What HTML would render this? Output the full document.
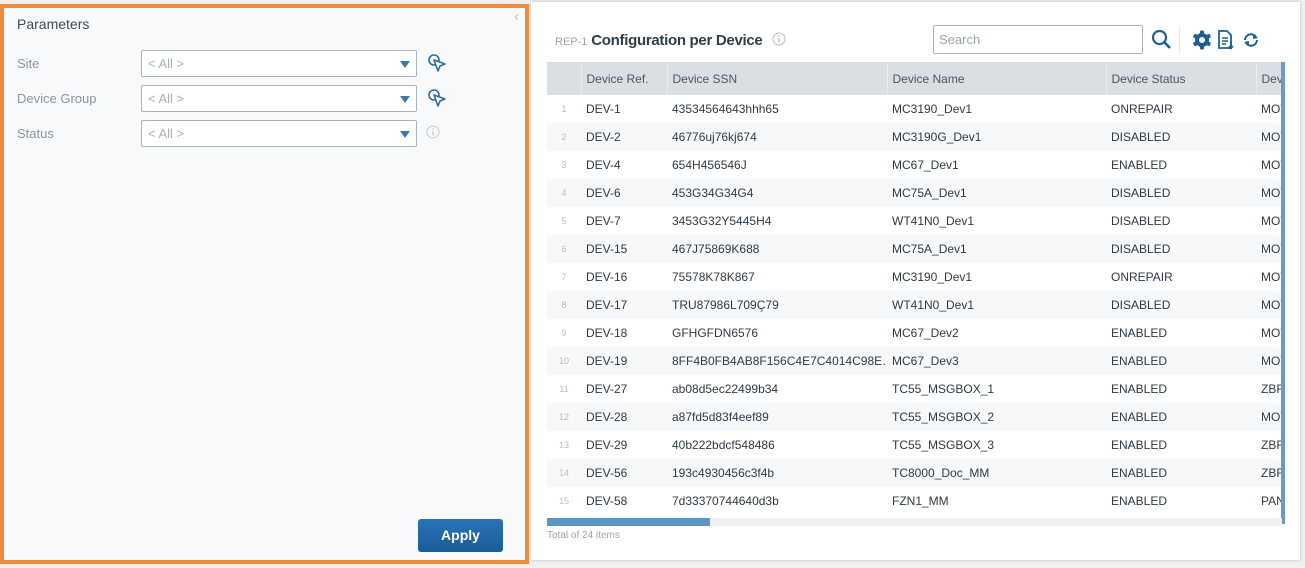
<!DOCTYPE html>
<html><head><meta charset="utf-8"><style>
*{box-sizing:border-box;margin:0;padding:0}
body{width:1305px;height:568px;overflow:hidden;background:#f0f0f0;font-family:"Liberation Sans",sans-serif;position:relative}
.left{position:absolute;left:0;top:4px;width:529px;height:560px;border:4px solid #ef8a3c;background:#f7f9fb}
.left h3{position:absolute;left:13px;top:8px;font-size:14px;color:#3f4a55;font-weight:normal}
.lbl{position:absolute;left:13px;font-size:13px;color:#8a959f}
.sel{position:absolute;left:137px;width:276px;height:27px;border:1px solid #a9b3bb;background:#fff;border-radius:2px;font-size:13px;color:#a8b1b9;padding:5px 6px}
.sel:after{content:"";position:absolute;right:6px;top:10px;border-left:5px solid transparent;border-right:5px solid transparent;border-top:7px solid #3b78a8}
.apply{position:absolute;left:414px;top:511px;width:85px;height:33px;background:linear-gradient(#2a73b6,#1a5c99);border-radius:3px;color:#fff;font-weight:bold;font-size:14px;text-align:center;line-height:33px}
.card{position:absolute;left:531px;top:2px;width:769px;height:558px;background:#fff;box-shadow:0 0 3px rgba(0,0,0,.25)}
.title{position:absolute;left:24px;top:30px;font-size:15px;color:#2f3d4a;font-weight:bold;letter-spacing:-0.3px}
.title small{font-size:11px;color:#9aa5ae;font-weight:normal;letter-spacing:0}
.search{position:absolute;left:402px;top:23px;width:210px;height:29px;border:1px solid #a9b3bb;border-radius:2px;font-size:13px;color:#9aa4ad;padding:6px 5px}
table{position:absolute;left:16px;top:60px;width:735px;border-collapse:collapse;font-size:12px;color:#2f3a44;table-layout:fixed}
th{background:#d9dfe3;height:33px;text-align:left;font-weight:normal;color:#4a555f;padding-left:5px;border-right:1px solid #e8ecef;white-space:nowrap;overflow:hidden}
td{height:28px;padding-left:5px;white-space:nowrap;overflow:hidden}
tr:nth-child(odd) td{background:#f6f8fa}
td.n{color:#b8bfc5;font-size:9px;text-align:center;padding:0}
.vs{position:absolute;left:750px;top:60px;width:4px;height:462px;background:#6b9bc3}
.hs{position:absolute;left:16px;top:516px;width:735px;height:8px;background:#eef2f5}
.hs div{width:163px;height:8px;background:#5d96c2}
.tot{position:absolute;left:16px;top:528px;font-size:10px;color:#9aa4ad}
</style></head><body>
<div class="left">
<h3>Parameters</h3>
<div class="lbl" style="top:48px">Site</div>
<div class="lbl" style="top:83px">Device Group</div>
<div class="lbl" style="top:118px">Status</div>
<div class="sel" style="top:42px">&lt; All &gt;</div>
<div class="sel" style="top:77px">&lt; All &gt;</div>
<div class="sel" style="top:112px">&lt; All &gt;</div>
<svg style="position:absolute;left:423px;top:45px" width="20" height="20" viewBox="0 0 20 20"><circle cx="7" cy="7" r="5" fill="none" stroke="#2e6a9c" stroke-width="1.6"/><path d="M7 7 L18 11 L13 13 L11 18 Z" fill="#fff" stroke="#2e6a9c" stroke-width="1.6" stroke-linejoin="round"/></svg>
<svg style="position:absolute;left:423px;top:80px" width="20" height="20" viewBox="0 0 20 20"><circle cx="7" cy="7" r="5" fill="none" stroke="#2e6a9c" stroke-width="1.6"/><path d="M7 7 L18 11 L13 13 L11 18 Z" fill="#fff" stroke="#2e6a9c" stroke-width="1.6" stroke-linejoin="round"/></svg>
<svg style="position:absolute;left:422px;top:117px" width="14" height="14"><circle cx="7" cy="7" r="6" fill="none" stroke="#c4cbd1"/><rect x="6.4" y="6" width="1.3" height="4.5" fill="#c4cbd1"/><circle cx="7" cy="4" r=".8" fill="#c4cbd1"/></svg>
<div style="position:absolute;left:510px;top:0px;color:#b9c2c9;font-size:15px">‹</div>
<div class="apply">Apply</div>
</div>
<div class="card">
<div class="title"><small>REP-1</small> Configuration per Device <svg width="14" height="14" style="vertical-align:-1px;margin-left:6px"><circle cx="7" cy="7" r="6" fill="none" stroke="#b5bec5"/><rect x="6.4" y="6" width="1.3" height="4.5" fill="#b5bec5"/><circle cx="7" cy="4" r=".8" fill="#b5bec5"/></svg></div>
<div class="search">Search</div>
<svg style="position:absolute;left:620px;top:27px" width="22" height="22"><circle cx="8.5" cy="8.5" r="6.5" fill="none" stroke="#1f5f92" stroke-width="2.2"/><path d="M13 13 L19 19" stroke="#1f5f92" stroke-width="2.6"/></svg>
<div style="position:absolute;left:648px;top:25px;width:1px;height:26px;background:#e3e7ea"></div>
<svg style="position:absolute;left:661px;top:28px" width="20" height="20" viewBox="0 0 20 20"><g fill="#1f5f92"><circle cx="10" cy="10" r="7"/><rect x="8" y="0.5" width="4" height="19" rx="1"/><rect x="8" y="0.5" width="4" height="19" rx="1" transform="rotate(60 10 10)"/><rect x="8" y="0.5" width="4" height="19" rx="1" transform="rotate(120 10 10)"/></g><circle cx="10" cy="10" r="3" fill="#fff"/></svg>
<svg style="position:absolute;left:685px;top:28px" width="20" height="20"><path d="M3 1 H11 L15 5 V18 H3 Z" fill="none" stroke="#1f5f92" stroke-width="1.8"/><path d="M6 8 H12 M6 11 H12 M6 14 H10" stroke="#1f5f92" stroke-width="1.5"/><path d="M15 11 V18 M13 16 L15 18.5 L17 16" stroke="#1f5f92" stroke-width="1.6" fill="none"/></svg>
<svg style="position:absolute;left:710px;top:29px" width="20" height="18"><path d="M4 9 A6 6 0 0 1 15 6" fill="none" stroke="#1f5f92" stroke-width="2"/><path d="M16 9 A6 6 0 0 1 5 12" fill="none" stroke="#1f5f92" stroke-width="2"/><path d="M12 3 L17 7 L12 8Z M8 15 L3 11 L8 10Z" fill="#1f5f92"/></svg>
<table>
<colgroup><col style="width:34px"><col style="width:86px"><col style="width:220px"><col style="width:219px"><col style="width:150px"><col style="width:26px"></colgroup>
<tr><th></th><th>Device Ref.</th><th>Device SSN</th><th>Device Name</th><th>Device Status</th><th>Dev</th></tr>
<tr><td class="n">1</td><td>DEV-1</td><td>43534564643hhh65</td><td>MC3190_Dev1</td><td>ONREPAIR</td><td>MOT</td></tr>
<tr><td class="n">2</td><td>DEV-2</td><td>46776uj76kj674</td><td>MC3190G_Dev1</td><td>DISABLED</td><td>MOT</td></tr>
<tr><td class="n">3</td><td>DEV-4</td><td>654H456546J</td><td>MC67_Dev1</td><td>ENABLED</td><td>MOT</td></tr>
<tr><td class="n">4</td><td>DEV-6</td><td>453G34G34G4</td><td>MC75A_Dev1</td><td>DISABLED</td><td>MOT</td></tr>
<tr><td class="n">5</td><td>DEV-7</td><td>3453G32Y5445H4</td><td>WT41N0_Dev1</td><td>DISABLED</td><td>MOT</td></tr>
<tr><td class="n">6</td><td>DEV-15</td><td>467J75869K688</td><td>MC75A_Dev1</td><td>DISABLED</td><td>MOT</td></tr>
<tr><td class="n">7</td><td>DEV-16</td><td>75578K78K867</td><td>MC3190_Dev1</td><td>ONREPAIR</td><td>MOT</td></tr>
<tr><td class="n">8</td><td>DEV-17</td><td>TRU87986L709Ç79</td><td>WT41N0_Dev1</td><td>DISABLED</td><td>MOT</td></tr>
<tr><td class="n">9</td><td>DEV-18</td><td>GFHGFDN6576</td><td>MC67_Dev2</td><td>ENABLED</td><td>MOT</td></tr>
<tr><td class="n">10</td><td>DEV-19</td><td>8FF4B0FB4AB8F156C4E7C4014C98E…</td><td>MC67_Dev3</td><td>ENABLED</td><td>MOT</td></tr>
<tr><td class="n">11</td><td>DEV-27</td><td>ab08d5ec22499b34</td><td>TC55_MSGBOX_1</td><td>ENABLED</td><td>ZBR</td></tr>
<tr><td class="n">12</td><td>DEV-28</td><td>a87fd5d83f4eef89</td><td>TC55_MSGBOX_2</td><td>ENABLED</td><td>MOT</td></tr>
<tr><td class="n">13</td><td>DEV-29</td><td>40b222bdcf548486</td><td>TC55_MSGBOX_3</td><td>ENABLED</td><td>ZBR</td></tr>
<tr><td class="n">14</td><td>DEV-56</td><td>193c4930456c3f4b</td><td>TC8000_Doc_MM</td><td>ENABLED</td><td>ZBR</td></tr>
<tr><td class="n">15</td><td>DEV-58</td><td>7d33370744640d3b</td><td>FZN1_MM</td><td>ENABLED</td><td>PAN</td></tr>
</table>
<div class="vs"></div>
<div class="hs"><div></div></div>
<div class="tot">Total of 24 items</div>
</div>
</body></html>
